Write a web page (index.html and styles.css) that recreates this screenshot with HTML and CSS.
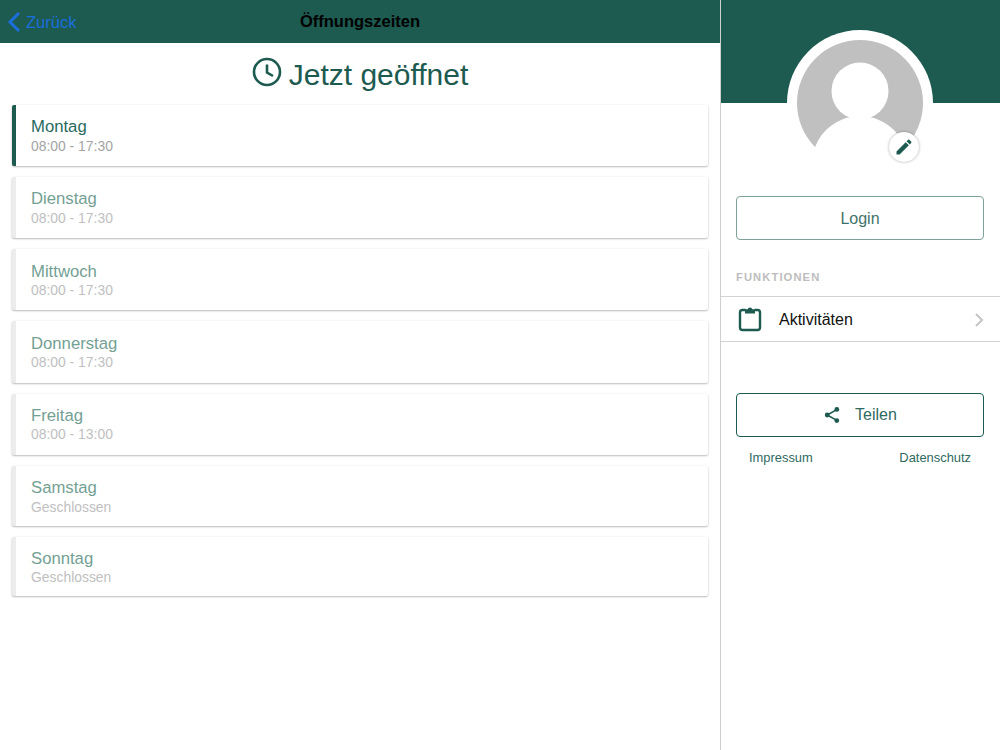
FILE: index.html
```html
<!DOCTYPE html>
<html lang="de">
<head>
<meta charset="utf-8">
<title>Öffnungszeiten</title>
<link rel="stylesheet" href="styles.css">
</head>
<body>
<main class="main">
  <header class="navbar">
    <a class="back">
      <svg class="back-icon" width="14" height="22" viewBox="0 0 14 22"><path d="M12 2 L3 11 L12 20" fill="none" stroke="#1a6fdc" stroke-width="3"/></svg>
      <span>Zurück</span>
    </a>
    <h1 class="nav-title">Öffnungszeiten</h1>
  </header>
  <div class="status">
    <svg class="clock" width="30" height="30" viewBox="0 0 30 30"><circle cx="15" cy="15" r="13" fill="none" stroke="#1d5a50" stroke-width="2.6"/><path d="M15 7.5 V15.5 L21 19" fill="none" stroke="#1d5a50" stroke-width="2.6"/></svg>
    <span class="status-text">Jetzt geöffnet</span>
  </div>
  <ul class="days">
    <li class="day today"><div class="day-name">Montag</div><div class="day-time">08:00 - 17:30</div></li>
    <li class="day"><div class="day-name">Dienstag</div><div class="day-time">08:00 - 17:30</div></li>
    <li class="day"><div class="day-name">Mittwoch</div><div class="day-time">08:00 - 17:30</div></li>
    <li class="day"><div class="day-name">Donnerstag</div><div class="day-time">08:00 - 17:30</div></li>
    <li class="day"><div class="day-name">Freitag</div><div class="day-time">08:00 - 13:00</div></li>
    <li class="day closed"><div class="day-name">Samstag</div><div class="day-time">Geschlossen</div></li>
    <li class="day closed"><div class="day-name">Sonntag</div><div class="day-time">Geschlossen</div></li>
  </ul>
</main>
<aside class="side">
  <div class="side-top"></div>
  <div class="avatar">
    <svg width="146" height="146" viewBox="0 0 146 146">
      <circle cx="73" cy="73" r="73" fill="#fff"/>
      <circle cx="73" cy="73" r="63" fill="#c0c0c0"/>
      <circle cx="73" cy="61" r="28.5" fill="#fff"/>
      <circle cx="73" cy="134" r="48" fill="#fff"/>
      <path d="M0 125 H146 V146 H0 Z" fill="#fff"/>
    </svg>
    <button class="edit">
      <svg width="20" height="20" viewBox="0 0 24 24"><path fill="#1d5a50" d="M3 17.25V21h3.75L17.81 9.94l-3.75-3.75L3 17.25zM20.71 7.04a1 1 0 0 0 0-1.41l-2.34-2.34a1 1 0 0 0-1.41 0l-1.83 1.83 3.75 3.75 1.83-1.83z"/></svg>
    </button>
  </div>
  <button class="btn btn-login"><span class="btn-text">Login</span></button>
  <div class="section-label">FUNKTIONEN</div>
  <div class="row">
    <svg class="row-icon" width="24" height="26" viewBox="0 0 24 26"><path d="M7.5 4 H4.5 A2.5 2.5 0 0 0 2 6.5 V21.5 A2.5 2.5 0 0 0 4.5 24 H19.5 A2.5 2.5 0 0 0 22 21.5 V6.5 A2.5 2.5 0 0 0 19.5 4 H16.5" fill="none" stroke="#1d5a50" stroke-width="2.4"/><path d="M7 3.2 H9.6 A2.5 2.5 0 0 1 14.4 3.2 H17 V7.6 H7 Z" fill="#1d5a50"/></svg>
    <span class="row-label">Aktivitäten</span>
    <svg class="chev" width="10" height="16" viewBox="0 0 10 16"><path d="M2 2 L8 8 L2 14" fill="none" stroke="#c4c4c4" stroke-width="2"/></svg>
  </div>
  <button class="btn btn-share">
    <svg width="18" height="18" viewBox="0 0 18 18"><path d="M13.8 3.6 L4.2 9 L13.8 14.4" fill="none" stroke="#1d5a50" stroke-width="1.6"/><circle cx="13.8" cy="3.4" r="2.4" fill="#1d5a50"/><circle cx="4.2" cy="9" r="2.4" fill="#1d5a50"/><circle cx="13.8" cy="14.6" r="2.4" fill="#1d5a50"/></svg>
    <span>Teilen</span>
  </button>
  <nav class="links"><a>Impressum</a><a>Datenschutz</a></nav>
</aside>
</body>
</html>
```
FILE: styles.css
```css
* { box-sizing: border-box; }
html, body { margin: 0; height: 100%; }
body {
  display: flex;
  width: 1000px;
  height: 750px;
  overflow: hidden;
  background: #fff;
  font-family: "Liberation Sans", Arial, sans-serif;
}
.main { width: 720px; flex: none; }
.navbar {
  position: relative;
  height: 43px;
  background: #1d5a50;
  display: flex;
  align-items: center;
  justify-content: center;
}
.back {
  position: absolute;
  left: 7px;
  top: 11px;
  display: flex;
  align-items: center;
  gap: 5px;
  color: #1a6fdc;
  font-size: 16.5px;
  line-height: 22px;
}
.back-icon { flex: none; }
.nav-title { margin: 0; font-size: 16.5px; font-weight: 700; color: #000; }
.status {
  height: 62px;
  display: flex;
  align-items: center;
  justify-content: center;
  gap: 7px;
}
.clock { margin-top: -5px; }
.status-text { font-size: 30px; color: #1d5a50; padding-top: 2px; }
.days {
  list-style: none;
  margin: 0;
  padding: 0 12px;
  display: flex;
  flex-direction: column;
  gap: 11px;
}
.day {
  height: 61.15px;
  flex: none;
  padding: 12.3px 0 0 15px;
  border-left: 4px solid #ececec;
  border-radius: 2px;
  background: #fff;
  box-shadow: 0 1px 2px rgba(0,0,0,.25), 0 0 3px rgba(0,0,0,.05);
}
.day.closed { height: 59.9px; }
.day-name { font-size: 16.7px; line-height: 19.5px; color: #74a094; }
.day-time { font-size: 13.9px; line-height: 18px; color: #c0c0c0; }
.today { border-left-color: #1d5a50; }
.today .day-name { color: #2b6a5e; }
.today .day-time { color: #a4a4a4; }
.side {
  width: 280px;
  flex: none;
  border-left: 1px solid #cfcfcf;
  display: flex;
  flex-direction: column;
}
.side-top { height: 103px; background: #1d5a50; }
.avatar {
  position: relative;
  width: 146px;
  height: 146px;
  margin: -73px 0 0 66px;
}
.avatar svg { display: block; }
.edit {
  position: absolute;
  left: 102px;
  top: 102px;
  width: 30px;
  height: 30px;
  padding: 0;
  border: 0;
  border-radius: 50%;
  background: #fff;
  box-shadow: 0 0 3px rgba(0,0,0,.35);
  display: flex;
  align-items: center;
  justify-content: center;
}
.btn {
  display: flex;
  align-items: center;
  justify-content: center;
  gap: 14px;
  width: 248px;
  height: 44px;
  margin-left: 15px;
  padding: 0;
  background: #fff;
  border-radius: 4px;
  font-family: inherit;
  font-size: 16px;
  color: #1d5a50;
}
.btn-login { margin-top: 20px; border: 1px solid #7fa39b; color: #3f7369; }
.btn-text { padding-top: 1px; }
.section-label {
  margin: 30px 0 0 15px;
  font-size: 11.2px;
  line-height: 14px;
  letter-spacing: 1.1px;
  font-weight: 700;
  color: #bdbdbd;
}
.row {
  margin-top: 12px;
  height: 46px;
  border-top: 1px solid #d2d2d2;
  border-bottom: 1px solid #d2d2d2;
  display: flex;
  align-items: center;
  padding: 0 16px 0 17px;
}
.row-icon { flex: none; }
.row-label { margin-left: 17px; flex: 1; font-size: 16px; color: #111; padding-top: 2px; }
.chev { flex: none; margin-top: 2px; }
.btn-share { margin-top: 51px; border: 1px solid #1d5a50; color: #2f6a5f; }
.links {
  display: flex;
  justify-content: space-between;
  margin: 13px 29px 0 28px;
  font-size: 12.9px;
  line-height: 16px;
  color: #2f6a5f;
}
```
